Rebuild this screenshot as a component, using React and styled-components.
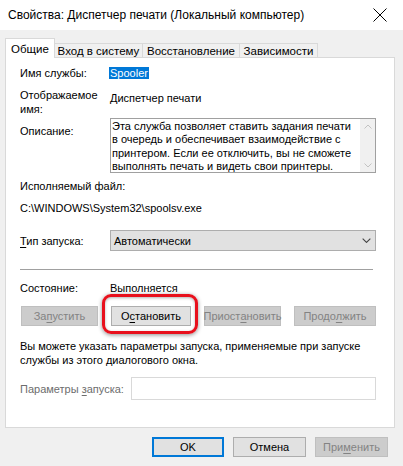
import styled, { createGlobalStyle } from "styled-components"

const GlobalStyle = createGlobalStyle`
  body {
    margin: 0;
    background: #f0f0f0;
    font-family: "Liberation Sans", Arial, sans-serif;
    font-size: 11px;
    color: #000;
  }
`;

const Window = styled.div`
  width: 403px;
  height: 466px;
  display: flex;
  flex-direction: column;
  background: #f0f0f0;
  overflow: hidden;
`;

const TitleBar = styled.div`
  height: 30px;
  flex: none;
  background: #fff;
  display: flex;
  align-items: center;
  justify-content: space-between;
  padding: 0 16px 0 8px;
`;

const Title = styled.span`
  font-size: 12px;
  white-space: nowrap;
`;

const Body = styled.div`
  padding: 8px 8px 0 5px;
`;

const Tabs = styled.div`
  display: flex;
  align-items: flex-end;
  height: 19px;
`;

const Tab = styled.div`
  position: relative;
  width: ${p => p.$w}px;
  height: ${p => (p.$active ? 20 : 14)}px;
  margin-bottom: ${p => (p.$active ? -1 : 0)}px;
  margin-left: -1px;
  box-sizing: border-box;
  border: 1px solid #d9d9d9;
  border-bottom: none;
  background: ${p => (p.$active ? "#fff" : "#f0f0f0")};
  z-index: ${p => (p.$active ? 2 : 1)};
  display: flex;
  align-items: center;
  justify-content: center;
  white-space: nowrap;
  font-size: 11.5px;
  &:first-child { margin-left: 0; }
`;

const Panel = styled.div`
  width: 390px;
  height: 371px;
  box-sizing: border-box;
  border: 1px solid #d9d9d9;
  background: #fff;
  padding: 8px 18px 0 14px;
  display: flex;
  flex-direction: column;
  line-height: 14px;
`;

const Field = styled.div`
  display: grid;
  grid-template-columns: ${p => p.$label || 90}px 1fr;
  align-items: ${p => p.$align || "start"};
  margin-top: ${p => p.$mt || 0}px;
`;

const Label = styled.div`
  color: ${p => (p.$disabled ? "#6d6d6d" : "#000")};
  padding-top: ${p => p.$pt || 0}px;
  white-space: nowrap;
`;

const Value = styled.div`
  padding-top: ${p => p.$pt || 0}px;
  white-space: nowrap;
`;

const Selected = styled.span`
  background: #0078d7;
  color: #fff;
  padding: 0 1px;
  margin-left: -1px;
`;

const TextBox = styled.div`
  height: 55px;
  box-sizing: border-box;
  border: 1px solid #a0a0a0;
  display: flex;
`;

const TextBoxText = styled.div`
  flex: 1;
  padding: 1px 2px 0 1px;
  line-height: 13.3px;
  overflow: hidden;
`;

const ScrollBar = styled.div`
  width: 15px;
  background: #f0f0f0;
  display: flex;
  flex-direction: column;
  justify-content: space-between;
  align-items: center;
  padding: 5px 0 4px;
`;

const Plain = styled.div`
  margin-top: ${p => p.$mt || 0}px;
  white-space: nowrap;
  color: ${p => (p.$disabled ? "#6d6d6d" : "#000")};
`;

const U = styled.span`
  text-decoration: underline;
  text-underline-offset: 2px;
`;

const Select = styled.div`
  height: 21px;
  box-sizing: border-box;
  border: 1px solid #adadad;
  background: #e1e1e1;
  display: flex;
  align-items: center;
  justify-content: space-between;
  padding: 0 4px 0 3px;
`;

const Separator = styled.div`
  height: 1px;
  background: #a0a0a0;
  margin: ${p => p.$mt}px 3px 0 0;
`;

const ButtonRow = styled.div`
  display: flex;
  justify-content: space-between;
  margin: 11px 0 0 1px;
`;

const Button = styled.div`
  position: relative;
  width: ${p => p.$w}px;
  height: 20px;
  box-sizing: border-box;
  border: ${p => (p.$default ? "2px solid #0078d7" : p.$disabled ? "1px solid #bfbfbf" : "1px solid #adadad")};
  background: ${p => (p.$disabled ? "#cccccc" : "#e1e1e1")};
  color: ${p => (p.$disabled ? "#838383" : "#000")};
  display: flex;
  align-items: center;
  justify-content: center;
  white-space: nowrap;
`;

const Highlight = styled.span`
  position: absolute;
  left: -10px;
  right: -8px;
  top: -13px;
  bottom: -9px;
  border: 3px solid #e8101c;
  border-radius: 9px;
  box-shadow: 0 1px 4px rgba(0, 0, 0, 0.45), inset 0 1px 3px rgba(0, 0, 0, 0.3);
  pointer-events: none;
`;

const Note = styled.div`
  margin-top: 14px;
  line-height: 13.5px;
`;

const Input = styled.div`
  height: 23px;
  box-sizing: border-box;
  border: 1px solid #d9d9d9;
  background: #fff;
`;

const Footer = styled.div`
  display: flex;
  justify-content: flex-end;
  gap: 9px;
  padding: 9px 7px 0 0;
`;

const Chevron = ({ up, color = "#c2c2c2", w = 8 }) => (
  <svg width={w} height={w / 2 + 1} viewBox="0 0 8 5">
    <path d={up ? "M0.5 4.5 L4 1 L7.5 4.5" : "M0.5 0.5 L4 4 L7.5 0.5"} fill="none" stroke={color} strokeWidth="1" />
  </svg>
);

const CloseIcon = () => (
  <svg width="14" height="14" viewBox="0 0 14 14">
    <path d="M0.5 0.5 L13.5 13.5 M13.5 0.5 L0.5 13.5" stroke="#000" strokeWidth="1" />
  </svg>
);

const App = () => {
  return (
    <Window>
      <GlobalStyle />
      <TitleBar>
        <Title>Свойства: Диспетчер печати (Локальный компьютер)</Title>
        <CloseIcon />
      </TitleBar>
      <Body>
        <Tabs>
          <Tab $active $w={50}>Общие</Tab>
          <Tab $w={89}>Вход в систему</Tab>
          <Tab $w={98}>Восстановление</Tab>
          <Tab $w={79}>Зависимости</Tab>
        </Tabs>
        <Panel>
          <Field>
            <Label>Имя службы:</Label>
            <Value><Selected>Spooler</Selected></Value>
          </Field>
          <Field $mt={8}>
            <Label>Отображаемое<br />имя:</Label>
            <Value $pt={3}>Диспетчер печати</Value>
          </Field>
          <Field $mt={2}>
            <Label $pt={6}>Описание:</Label>
            <TextBox>
              <TextBoxText>
                Эта служба позволяет ставить задания печати в очередь и обеспечивает взаимодействие с принтером. Если ее отключить, вы не сможете выполнять печать и видеть свои принтеры.
              </TextBoxText>
              <ScrollBar>
                <Chevron up />
                <Chevron />
              </ScrollBar>
            </TextBox>
          </Field>
          <Plain $mt={6}>Исполняемый файл:</Plain>
          <Plain $mt={8}>C:\WINDOWS\System32\spoolsv.exe</Plain>
          <Field $mt={15} $align="center">
            <Label><U>Т</U>ип запуска:</Label>
            <Select>
              <span>Автоматически</span>
              <Chevron color="#444" w={9} />
            </Select>
          </Field>
          <Separator $mt={18} />
          <Field $mt={11}>
            <Label>Состояние:</Label>
            <Value>Выполняется</Value>
          </Field>
          <ButtonRow>
            <Button $w={77} $disabled>За<U>п</U>устить</Button>
            <Button $w={80}>
              О<U>с</U>тановить
              <Highlight />
            </Button>
            <Button $w={77} $disabled>Приост<U>а</U>новить</Button>
            <Button $w={82} $disabled>Продо<U>л</U>жить</Button>
          </ButtonRow>
          <Note>
            Вы можете указать параметры запуска, применяемые при запуске службы из этого диалогового окна.
          </Note>
          <Field $mt={10} $label={111} $align="center">
            <Label $disabled>Параметры <U>з</U>апуска:</Label>
            <Input />
          </Field>
        </Panel>
        <Footer>
          <Button $w={72} $default>OK</Button>
          <Button $w={73}>Отмена</Button>
          <Button $w={73} $disabled>При<U>м</U>енить</Button>
        </Footer>
      </Body>
    </Window>
  )
}

export default App
